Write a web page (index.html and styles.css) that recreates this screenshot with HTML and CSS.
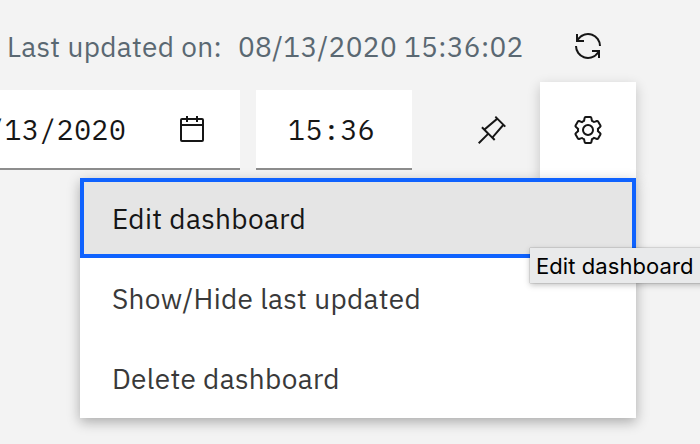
FILE: index.html
```
<!DOCTYPE html>
<html lang="en">
<head>
<meta charset="utf-8">
<title>Dashboard toolbar</title>
<link rel="stylesheet" href="styles.css">
</head>
<body>
<div class="updated">
  <span class="label">Last updated on:</span>
  <span class="stamp">08/13/2020 15:36:02</span>
  <svg class="icon refresh" viewBox="0 0 32 32"><path d="M12 10H6.78A11 11 0 0 1 27 16h2A13 13 0 0 0 6 7.68V4H4v8h8zM20 22h5.22A11 11 0 0 1 5 16H3a13 13 0 0 0 23 8.32V28h2V20H20z"/></svg>
</div>
<div class="controls">
  <div class="field date">
    <span>/13/2020</span>
    <svg class="icon" viewBox="0 0 32 32"><path d="M26,4H22V2H20V4H12V2H10V4H6A2,2,0,0,0,4,6V26a2,2,0,0,0,2,2H26a2,2,0,0,0,2-2V6A2,2,0,0,0,26,4Zm0,22H6V12H26Zm0-16H6V6h4V8h2V6h8V8h2V6h4Z"/></svg>
  </div>
  <div class="field time"><span>15:36</span></div>
  <div class="button">
    <svg class="icon" viewBox="0 0 32 32"><path d="M28.59,13.31,30,11.9,20,2,18.69,3.31,19.87,4.5,8.38,14.32,6.66,12.61,5.25,14l5.66,5.68L2,28.58,3.41,30l8.91-8.91L18,26.75l1.39-1.42-1.71-1.71L27.5,12.13ZM16.26,22.2,9.8,15.74,21.29,5.92l4.79,4.79Z"/></svg>
  </div>
  <div class="button open">
    <svg class="icon" viewBox="0 0 32 32"><path d="M27,16.76c0-.25,0-.5,0-.76s0-.51,0-.77l1.92-1.68A2,2,0,0,0,29.3,11L26.94,7a2,2,0,0,0-1.73-1,2,2,0,0,0-.64.1l-2.43.82a11.35,11.35,0,0,0-1.31-.75l-.51-2.52a2,2,0,0,0-2-1.61H13.64a2,2,0,0,0-2,1.61l-.51,2.52a11.48,11.48,0,0,0-1.32.75L7.43,6.06A2,2,0,0,0,6.79,6,2,2,0,0,0,5.06,7L2.7,11a2,2,0,0,0,.41,2.51L5,15.24c0,.25,0,.5,0,.76s0,.51,0,.77L3.11,18.45A2,2,0,0,0,2.7,21L5.06,25a2,2,0,0,0,1.73,1,2,2,0,0,0,.64-.1l2.43-.82a11.35,11.35,0,0,0,1.31.75l.51,2.52a2,2,0,0,0,2,1.61h4.72a2,2,0,0,0,2-1.61l.51-2.52a11.48,11.48,0,0,0,1.32-.75l2.42.82a2,2,0,0,0,.64.1,2,2,0,0,0,1.73-1L29.3,21a2,2,0,0,0-.41-2.51ZM25.21,24l-3.43-1.16a8.86,8.86,0,0,1-2.71,1.57L18.36,28H13.64l-.71-3.55a9.36,9.36,0,0,1-2.7-1.57L6.79,24,4.43,20l2.72-2.4a8.9,8.9,0,0,1,0-3.13L4.43,12,6.79,8l3.43,1.16a8.86,8.86,0,0,1,2.71-1.57L13.64,4h4.72l.71,3.55a9.36,9.36,0,0,1,2.7,1.57L25.21,8,27.57,12l-2.72,2.4a8.9,8.9,0,0,1,0,3.13L27.57,20ZM16,22a6,6,0,1,1,6-6A5.94,5.94,0,0,1,16,22Zm0-10a3.91,3.91,0,0,0-4,4,3.91,3.91,0,0,0,4,4,3.91,3.91,0,0,0,4-4A3.91,3.91,0,0,0,16,12Z"/></svg>
  </div>
  <div class="menu">
    <div class="item active"><span class="edit">Edit dashboard</span></div>
    <div class="item"><span class="show">Show/Hide last updated</span></div>
    <div class="item"><span class="delete">Delete dashboard</span></div>
    <div class="tooltip">Edit dashboard</div>
  </div>
</div>
</body>
</html>
```

FILE: styles.css
```
* { box-sizing: border-box; }
body {
  margin: 0;
  width: 700px;
  height: 444px;
  overflow: hidden;
  background: #f3f3f3;
  color: #161616;
  font-family: "IBM Plex Sans", "Noto Sans", sans-serif;
  font-size: 28px;
  letter-spacing: .32px;
  white-space: nowrap;
}
.icon { display: block; width: 32px; height: 32px; flex: none; fill: #161616; }
.updated {
  display: flex;
  align-items: center;
  height: 82px;
  padding: 10px 0 0 7px;
  color: #5a6872;
}
.label { width: 231px; }
.stamp { width: 334px; }
.controls {
  position: relative;
  display: flex;
  align-items: center;
  width: 636px;
  height: 96px;
}
.field {
  display: flex;
  align-items: center;
  height: 80px;
  background: #fff;
  border-bottom: 2px solid #8d8d8d;
  font-family: "IBM Plex Mono", "Liberation Mono", monospace;
  font-size: 28px;
  letter-spacing: .64px;
}
.field span { padding-bottom: 2px; }
.date { width: 240px; justify-content: flex-end; padding: 2px 32px 0 0; gap: 49.5px; }
.time { width: 156px; margin-left: 16px; padding: 2px 0 0 32px; }
.button {
  display: flex;
  align-items: center;
  justify-content: center;
  width: 96px;
  height: 96px;
}
.time + .button { margin-left: 32px; }
.open { background: #fff; box-shadow: 0 4px 12px rgba(0, 0, 0, .2); }
.menu {
  position: absolute;
  top: 96px;
  right: 0;
  width: 556px;
  background: #fff;
  box-shadow: 0 4px 12px rgba(0, 0, 0, .3);
}
.item {
  display: flex;
  align-items: center;
  height: 80px;
  padding: 0 32px;
  color: #393939;
}
.active {
  padding: 0 28px;
  border: 4px solid #0f62fe;
  background: #e5e5e5;
  color: #161616;
}
.tooltip {
  position: absolute;
  left: 450px;
  top: 70px;
  width: 180px;
  height: 35px;
  padding-left: 6px;
  background: #e9eaeb;
  box-shadow: 0 0 1px rgba(0, 0, 0, .5), 0 2px 6px rgba(0, 0, 0, .25);
  color: #000;
  font-family: Inter, sans-serif;
  font-size: 22px;
  letter-spacing: .08px;
  line-height: 36px;
}
```
